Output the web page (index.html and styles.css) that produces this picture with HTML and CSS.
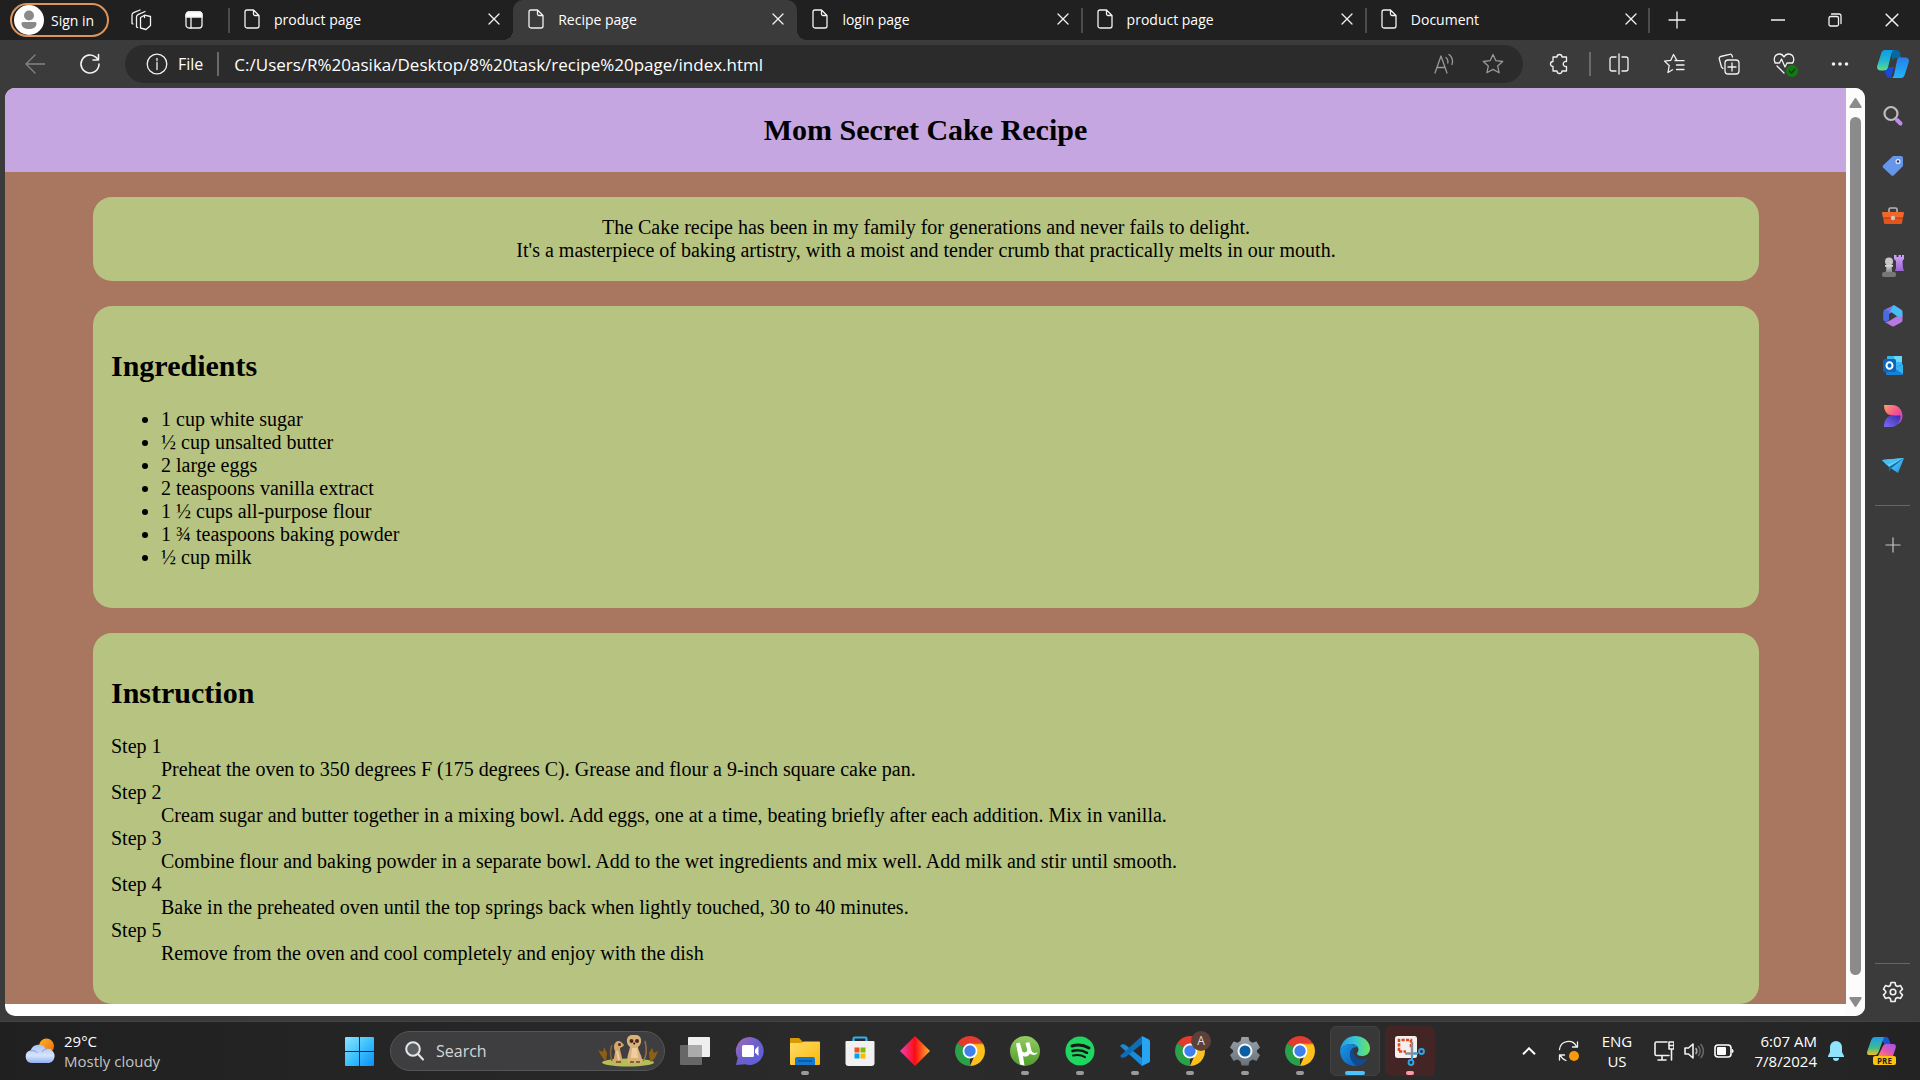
FILE: index.html
```html
<!DOCTYPE html>
<html lang="en">
<head>
<meta charset="utf-8">
<meta name="viewport" content="width=device-width, initial-scale=1">
<title>Recipe page</title>
<link rel="stylesheet" href="styles.css">
</head>
<body>
<svg class="sprite" width="0" height="0" aria-hidden="true">
  <defs>
    <linearGradient id="g-win" x1="0" y1="0" x2="1" y2="1"><stop offset="0" stop-color="#8be4ff"/><stop offset=".5" stop-color="#3dc1fb"/><stop offset="1" stop-color="#0a8ffb"/></linearGradient>
    <linearGradient id="g-cloud" x1="0" y1="0" x2="0" y2="1"><stop offset="0" stop-color="#a9c3f4"/><stop offset=".6" stop-color="#d7e4fb"/><stop offset="1" stop-color="#8fb0ef"/></linearGradient>
    <linearGradient id="g-sun" x1="0" y1="0" x2="1" y2="1"><stop offset="0" stop-color="#f8b42c"/><stop offset="1" stop-color="#ee6c0e"/></linearGradient>
    <linearGradient id="g-teal" x1="0" y1="0" x2="0" y2="1"><stop offset="0" stop-color="#0f9be8"/><stop offset=".5" stop-color="#20b5d0"/><stop offset="1" stop-color="#5edc8c"/></linearGradient>
    <linearGradient id="g-blue" x1="0" y1="0" x2="0" y2="1"><stop offset="0" stop-color="#2a7de8"/><stop offset="1" stop-color="#1fb6fa"/></linearGradient>
    <linearGradient id="g-pre1" x1="0" y1="0" x2="0" y2="1"><stop offset="0" stop-color="#1e9bf0"/><stop offset=".6" stop-color="#3fbb8c"/><stop offset="1" stop-color="#f0c020"/></linearGradient>
    <linearGradient id="g-pre2" x1="1" y1="0" x2="0" y2="1"><stop offset="0" stop-color="#9a55f5"/><stop offset=".6" stop-color="#e858a8"/><stop offset="1" stop-color="#ff8a55"/></linearGradient>
    <linearGradient id="g-folder" x1="0" y1="0" x2="1" y2="1"><stop offset="0" stop-color="#ffdc66"/><stop offset="1" stop-color="#fbb80c"/></linearGradient>
    <linearGradient id="g-chat" x1="0" y1="0" x2="1" y2="1"><stop offset="0" stop-color="#a66ab8"/><stop offset=".5" stop-color="#6a60cc"/><stop offset="1" stop-color="#5a5fe0"/></linearGradient>
    <linearGradient id="g-diamond" x1="0" y1="0" x2="1" y2="0"><stop offset="0" stop-color="#f23fb6"/><stop offset=".5" stop-color="#f90d14"/><stop offset="1" stop-color="#ffb52c"/></linearGradient>
    <linearGradient id="g-edge1" x1="0" y1="0" x2="1" y2="0"><stop offset="0" stop-color="#1e9ee8"/><stop offset=".5" stop-color="#35c7d8"/><stop offset="1" stop-color="#6fe55c"/></linearGradient>
    <linearGradient id="g-edge2" x1="0" y1="0" x2="1" y2="1"><stop offset="0" stop-color="#1b96e6"/><stop offset="1" stop-color="#0c5db2"/></linearGradient>
    <linearGradient id="g-tele" x1="0" y1="0" x2="1" y2="1"><stop offset="0" stop-color="#5fd8fb"/><stop offset="1" stop-color="#1d8fe0"/></linearGradient>
    <linearGradient id="g-des1" x1="0" y1="0" x2="1" y2="1"><stop offset="0" stop-color="#ffa060"/><stop offset=".5" stop-color="#f4538e"/><stop offset="1" stop-color="#a83cf0"/></linearGradient>
    <linearGradient id="g-des2" x1="0" y1="1" x2="1" y2="0"><stop offset="0" stop-color="#7b6cf8"/><stop offset="1" stop-color="#3a2ca8"/></linearGradient>
    <linearGradient id="g-grey" x1="0" y1="0" x2="0" y2="1"><stop offset="0" stop-color="#dcdcdc"/><stop offset="1" stop-color="#7d7d7d"/></linearGradient>
    <linearGradient id="g-rook" x1="0" y1="0" x2="0" y2="1"><stop offset="0" stop-color="#d0a4f6"/><stop offset="1" stop-color="#9a62d6"/></linearGradient>
    <linearGradient id="g-gear" x1="0" y1="0" x2="0" y2="1"><stop offset="0" stop-color="#98a2ab"/><stop offset="1" stop-color="#68727b"/></linearGradient>
    <linearGradient id="g-ut" x1="0" y1="0" x2="0" y2="1"><stop offset="0" stop-color="#94cc62"/><stop offset="1" stop-color="#4f9d2c"/></linearGradient>
    <symbol id="page" viewBox="0 0 16 20"><path d="M3 1h6.500L15 6.500V17a2 2 0 0 1-2 2H3a2 2 0 0 1-2-2V3a2 2 0 0 1 2-2zM9.500 1v4a1.500 1.500 0 0 0 1.500 1.500h4"/></symbol>
    <symbol id="cross" viewBox="0 0 12 12"><path d="M1 1l10 10M11 1L1 11"/></symbol>
    <symbol id="plus" viewBox="0 0 18 18"><path d="M9 1v16M1 9h16"/></symbol>
    <symbol id="chrome" viewBox="0 0 30 30">
      <path d="M15 15L2.010 7.500A15 15 0 0 1 27.990 7.500z" fill="#e33b2e"/>
      <path d="M15 15L2.010 7.500A15 15 0 0 0 15 30z" fill="#2aa148"/>
      <path d="M15 15h6.500L15 30A15 15 0 0 0 27.990 7.500H15z" fill="#fcc21b"/>
      <path d="M15 7.500h13L28 8.200H15z" fill="#e33b2e"/>
      <path d="M8.500 18.700L2 7.500 15 15z" fill="#2aa148"/>
      <circle cx="15" cy="15" r="7.400" fill="#fff"/><circle cx="15" cy="15" r="5.700" fill="#3f80ee"/>
    </symbol>
  </defs>
</svg>

<div class="window">
  <header class="tabbar">
    <div class="tab-tools">
      <button class="signin" type="button">
        <svg width="30" height="30" viewBox="0 0 30 30" aria-hidden="true"><circle cx="15" cy="15" r="15" fill="#fff"/><circle cx="15" cy="10.500" r="5" fill="#8a8a8a"/><path d="M9 17h12a1.500 1.500 0 0 1 1.500 1.500c0 4-3.500 5.500-7.500 5.500s-7.500-1.500-7.500-5.500A1.500 1.500 0 0 1 9 17z" fill="#8a8a8a"/></svg>
        Sign in
      </button>
      <button class="icon-btn" type="button" aria-label="Workspaces"><svg class="line" width="22" height="22" viewBox="0 0 22 22"><path d="M10.500 8.500l4-2.300 6 1.300v9l-4.500 4-5.500-1.500zM6.500 18V8a2.500 2.500 0 0 1 1.500-2.300l7-3.200M6.500 18l1.200.5M2 14.500V6a2.500 2.500 0 0 1 1.500-2.300L10 1M14.500 6.200v2.300M2 14.500l1 .5"/></svg></button>
      <button class="icon-btn" type="button" aria-label="Tab actions"><svg class="line" width="20" height="20" viewBox="0 0 20 20"><rect x="2" y="2" width="16" height="16" rx="3"/><path d="M7 6v12"/><path d="M2 7V5a3 3 0 0 1 3-3h10a3 3 0 0 1 3 3v2z" fill="#fff"/></svg></button>
    </div>
    <nav class="tabs" aria-label="Tabs">
      <div class="tab"><svg class="line" width="16" height="20"><use href="#page"/></svg><a href="#">product page</a><button class="icon-btn" type="button" aria-label="Close tab"><svg class="line" width="12" height="12"><use href="#cross"/></svg></button></div>
      <div class="tab active"><svg class="line" width="16" height="20"><use href="#page"/></svg><a href="#">Recipe page</a><button class="icon-btn" type="button" aria-label="Close tab"><svg class="line" width="12" height="12"><use href="#cross"/></svg></button></div>
      <div class="tab plain"><svg class="line" width="16" height="20"><use href="#page"/></svg><a href="#">login page</a><button class="icon-btn" type="button" aria-label="Close tab"><svg class="line" width="12" height="12"><use href="#cross"/></svg></button></div>
      <div class="tab"><svg class="line" width="16" height="20"><use href="#page"/></svg><a href="#">product page</a><button class="icon-btn" type="button" aria-label="Close tab"><svg class="line" width="12" height="12"><use href="#cross"/></svg></button></div>
      <div class="tab last"><svg class="line" width="16" height="20"><use href="#page"/></svg><a href="#">Document</a><button class="icon-btn" type="button" aria-label="Close tab"><svg class="line" width="12" height="12"><use href="#cross"/></svg></button></div>
    </nav>
    <div class="window-tools">
      <button class="icon-btn new-tab" type="button" aria-label="New tab"><svg class="line" width="18" height="18"><use href="#plus"/></svg></button>
      <button class="icon-btn ctl" type="button" aria-label="Minimise"><svg class="line" width="14" height="14" viewBox="0 0 14 14"><path d="M0 7h14"/></svg></button>
      <button class="icon-btn ctl" type="button" aria-label="Restore"><svg class="line" width="14" height="14" viewBox="0 0 14 14"><rect x="1" y="3.500" width="9.500" height="9.500" rx="1.500"/><path d="M3.500 1H11a2 2 0 0 1 2 2v7.500"/></svg></button>
      <button class="icon-btn ctl" type="button" aria-label="Close"><svg class="line" width="14" height="14"><use href="#cross"/></svg></button>
    </div>
  </header>

  <div class="toolbar">
    <div class="nav-tools">
      <button class="icon-btn dim" type="button" aria-label="Back"><svg class="line" width="20" height="20" viewBox="0 0 20 20"><path d="M20 10H1M10 1l-9 9 9 9"/></svg></button>
      <button class="icon-btn" type="button" aria-label="Reload"><svg class="line thick" width="22" height="22" viewBox="0 0 22 22"><path d="M20 11a9 9 0 1 1-3-6.700L19.500 7M19.500 1.500V7H14"/></svg></button>
    </div>
    <div class="address">
      <svg class="line" width="22" height="22" viewBox="0 0 22 22" aria-hidden="true"><circle cx="11" cy="11" r="9.800"/><path d="M11 9.500v7M11 5.500v2"/></svg>
      <label for="url">File</label>
      <span class="bar"></span>
      <input id="url" type="text" value="C:/Users/R%20asika/Desktop/8%20task/recipe%20page/index.html">
      <button class="icon-btn dim2" type="button" aria-label="Read aloud"><svg class="line" width="20" height="22" viewBox="0 0 20 22"><path d="M1 20L7 3l6 17M3 14.500h8M12 4.500c1.500 1.200 2.200 3.200 1.800 5.500M15 1.500c3 2.400 4.200 6 3 10"/></svg></button>
      <button class="icon-btn dim2" type="button" aria-label="Add to favourites"><svg class="line" width="22" height="22" viewBox="0 0 22 22"><path d="M11 1.500l2.900 6.200 6.800.8-5 4.600 1.400 6.700-6.100-3.400-6.100 3.400 1.400-6.700-5-4.600 6.800-.8z"/></svg></button>
    </div>
    <div class="actions">
      <button class="icon-btn" type="button" aria-label="Extensions"><svg class="line" width="22" height="22" viewBox="0 0 22 22"><path d="M5 4h4a2.500 2.500 0 0 1 5 0h4.500v4.500a2.600 2.600 0 1 0 0 5V18H14a2.500 2.500 0 0 1-5 0H5v-4.500a2.500 2.500 0 1 1 0-5z"/></svg></button>
      <span class="bar"></span>
      <button class="icon-btn" type="button" aria-label="Split screen"><svg class="line" width="22" height="22" viewBox="0 0 22 22"><path d="M11 1v20M8 4H4a2 2 0 0 0-2 2v10a2 2 0 0 0 2 2h4M14 4h4a2 2 0 0 1 2 2v10a2 2 0 0 1-2 2h-4"/></svg></button>
      <button class="icon-btn" type="button" aria-label="Favourites"><svg class="line" width="22" height="22" viewBox="0 0 22 22"><path d="M14 7.500L10.500 1.500 7.800 7.300 1.500 8.100l4.700 4.400L5 19.500l4.500-2.700M13 7.700h8M13.500 12h7.500M13.500 16.500h7.500M14 7.500h-2"/></svg></button>
      <button class="icon-btn" type="button" aria-label="Collections"><svg class="line" width="22" height="22" viewBox="0 0 22 22"><rect x="7" y="7" width="14" height="14" rx="3"/><path d="M14 10v8M10 14h8M14.500 4l-.5-1.500a2 2 0 0 0-2.400-1.200L2.700 3.500A2 2 0 0 0 1.300 6L3.500 14l1.500 1.500"/></svg></button>
      <button class="icon-btn" type="button" aria-label="Browser essentials"><svg class="line" width="25" height="25" viewBox="0 0 25 25"><path d="M2.500 11C0 7.500 1.500 2 6.500 2c2.500 0 4 2 4.500 3 .5-1 2-3 4.500-3 5 0 6.500 5.500 4 9M2 11h4.500l2-4 3.500 8 2-4h5M4 14l7 7"/><circle cx="19" cy="19" r="6" fill="#137a13" stroke="none"/><path d="M16.500 19l2 2 3.500-4" stroke="#0a3d0a"/></svg></button>
      <button class="icon-btn" type="button" aria-label="More"><svg width="18" height="6" viewBox="0 0 18 6" fill="#f2f2f2"><circle cx="2.500" cy="3" r="1.800"/><circle cx="9" cy="3" r="1.800"/><circle cx="15.500" cy="3" r="1.800"/></svg></button>
      <button class="icon-btn copilot" type="button" aria-label="Copilot"><svg width="32" height="28" viewBox="0 0 32 28"><path d="M14 0h5c2.500 0 3.500 1 4 3l1.500 5H19c-2 0-3 1-3.500 3z" fill="#07679e"/><path d="M8 0h9c-1 0-2 1-2.500 3l-3.500 14.500c-.6 2-1.700 3-3.500 3H3.500c-2.500 0-4-2-3.300-4.500L4 4c.7-2.500 2-4 4-4z" fill="url(#g-teal)"/><path d="M7 20.500c3 0 4-1.500 4.500-3.500H17l-3 11h-1c-2 0-3.500-1-4-3z" fill="#1a49d6"/><path d="M22 7.500h6.500c2.500 0 4 2 3.300 4.500L28 24c-.7 2.500-2 4-4 4H14.500c1 0 2-1 2.500-3l3-14.500c.4-2 1-3 2-3z" fill="url(#g-blue)"/></svg></button>
    </div>
  </div>

  <div class="middle">
    <div class="viewport">
      <main class="page">
        <div class="title"><h1>Mom Secret Cake Recipe</h1></div>
        <div class="recipe">
          <section class="card intro">The Cake recipe has been in my family for generations and never fails to delight.<br>It's a masterpiece of baking artistry, with a moist and tender crumb that practically melts in our mouth.</section>
          <section class="card">
            <h2>Ingredients</h2>
            <ul>
              <li>1 cup white sugar</li>
              <li>½ cup unsalted butter</li>
              <li>2 large eggs</li>
              <li>2 teaspoons vanilla extract</li>
              <li>1 ½ cups all-purpose flour</li>
              <li>1 ¾ teaspoons baking powder</li>
              <li>½ cup milk</li>
            </ul>
          </section>
          <section class="card">
            <h2>Instruction</h2>
            <dl>
              <dt>Step 1</dt><dd>Preheat the oven to 350 degrees F (175 degrees C). Grease and flour a 9-inch square cake pan.</dd>
              <dt>Step 2</dt><dd>Cream sugar and butter together in a mixing bowl. Add eggs, one at a time, beating briefly after each addition. Mix in vanilla.</dd>
              <dt>Step 3</dt><dd>Combine flour and baking powder in a separate bowl. Add to the wet ingredients and mix well. Add milk and stir until smooth.</dd>
              <dt>Step 4</dt><dd>Bake in the preheated oven until the top springs back when lightly touched, 30 to 40 minutes.</dd>
              <dt>Step 5</dt><dd>Remove from the oven and cool completely and enjoy with the dish</dd>
            </dl>
          </section>
        </div>
      </main>
      <div class="scrollbar" aria-hidden="true">
        <svg width="13" height="10" viewBox="0 0 13 10"><path d="M5.500.8a1.200 1.200 0 0 1 2 0L12.500 8.500a1 1 0 0 1-1 1.500h-10a1 1 0 0 1-1-1.500z" fill="#8b8b8b"/></svg>
        <span class="thumb"></span>
        <svg width="13" height="10" viewBox="0 0 13 10"><path d="M5.500 9.200a1.200 1.200 0 0 0 2 0L12.500 1.500a1 1 0 0 0-1-1.500h-10a1 1 0 0 0-1 1.500z" fill="#8b8b8b"/></svg>
      </div>
    </div>

    <aside class="sidebar" aria-label="Sidebar">
      <button class="icon-btn" type="button" aria-label="Search"><svg width="22" height="22" viewBox="0 0 22 22"><circle cx="9" cy="8.500" r="6.500" fill="none" stroke="#bdbdbd" stroke-width="2.200"/><path d="M15 15l3.500 3.500" stroke="#c08cf0" stroke-width="4" stroke-linecap="round"/></svg></button>
      <button class="icon-btn" type="button" aria-label="Shopping"><svg width="22" height="22" viewBox="0 0 22 22"><path d="M11 1h8a2 2 0 0 1 2 2v8L12 20a2 2 0 0 1-3 0L1.500 13a2 2 0 0 1 0-3z" fill="#6596ea"/><circle cx="16" cy="6.500" r="2.500" fill="#e8eefc"/><circle cx="16" cy="6.500" r="1.300" fill="#2b3a5c"/></svg></button>
      <button class="icon-btn" type="button" aria-label="Tools"><svg width="22" height="22" viewBox="0 0 22 22"><path d="M7 7V4.500A1.500 1.500 0 0 1 8.500 3h5A1.500 1.500 0 0 1 15 4.500V7" fill="none" stroke="#b5b5b5" stroke-width="1.600"/><path d="M1 12h20l-1 6a1 1 0 0 1-1 1H3a1 1 0 0 1-1-1z" fill="#e5541a"/><path d="M1 7h20a1 1 0 0 1 1 1l-1 5H1L0 8a1 1 0 0 1 1-1z" fill="#f0662b"/><path d="M1 13h20" stroke="#a83a10"/><circle cx="11" cy="13" r="2.200" fill="#d0c7c2"/></svg></button>
      <button class="icon-btn" type="button" aria-label="Games"><svg width="22" height="22" viewBox="0 0 22 22"><path d="M12 0h2.500v2h2V0h2.500v2h1V0H22v4l-1.500 2 .5 7 1 3h-9l1-3V6l-2-2z" fill="url(#g-rook)"/><circle cx="7" cy="6.500" r="4" fill="#c6c6c6"/><path d="M3 10h8v1.500l-1.500 1 1 5.500H3.500l1-5.500-1.500-1z" fill="url(#g-grey)"/><path d="M0 19a2 2 0 0 1 2-2h10a2 2 0 0 1 2 2v1a2 2 0 0 1-2 2H2a2 2 0 0 1-2-2z" fill="#777"/></svg></button>
      <button class="icon-btn" type="button" aria-label="Microsoft 365"><svg width="22" height="22" viewBox="0 0 22 22"><path d="M12 0L3 4.500a3 3 0 0 0-1.500 2.600V14c0 2 3 3 5.500 1V9l6-4z" fill="#7b78e6"/><path d="M10.500 1.500L12 0l7 4.500a3 3 0 0 1 1.500 2.600V11c-2 2-5 1.500-6.500-.5L8.500 6.500z" fill="#46bdf5"/><path d="M20.500 10v5a3 3 0 0 1-1.500 2.600L12.500 21a3 3 0 0 1-3 0l-7-4.300c2 .3 4-.2 5.500-1.200l6.500-4c2 .8 4.500.5 6-1.500z" fill="#b878e4"/><path d="M7 9v6c-1.500 1.500-4 2-5.500.5V7.100L3 4.500 7 6z" fill="#4a6ae0"/></svg></button>
      <button class="icon-btn" type="button" aria-label="Outlook"><svg width="22" height="22" viewBox="0 0 22 22"><rect x="5" y="1" width="15" height="12" rx="1" fill="#39b5ee"/><path d="M12 1h8v6h-8z" fill="#67d7fb"/><path d="M21 9v10a1 1 0 0 1-1 1H5a1 1 0 0 1-1-1V13h8z" fill="#1581d4"/><path d="M21 9.500V19L12 13z" fill="#35b0f0"/><rect x="1" y="4" width="13" height="13" rx="1.500" fill="#0c66bd"/><ellipse cx="7.500" cy="10.500" rx="3" ry="3.300" fill="none" stroke="#fff" stroke-width="2"/></svg></button>
      <button class="icon-btn" type="button" aria-label="Designer"><svg width="22" height="22" viewBox="0 0 22 22"><path d="M2 0h8c6 0 10.500 4.500 10.500 11 0 4-2 7-5 8.500l-4-9C6 11 2 7 2 0z" fill="url(#g-des1)"/><path d="M2 22C2 15 5 10.500 11 10.500h7.500C18.500 17 15 22 9 22z" fill="url(#g-des2)"/></svg></button>
      <button class="icon-btn" type="button" aria-label="Drop"><svg width="22" height="22" viewBox="0 0 22 22"><path d="M0 5l22-2-15 9z" fill="#5ed3f8"/><path d="M22 3l-6 15-9-6z" fill="url(#g-tele)"/><path d="M7 12L22 3 9 13.500 7 17z" fill="#1469b8"/><path d="M0 5l22-2L5 10z" fill="#49bdf2"/></svg></button>
      <span class="rule"></span>
      <button class="icon-btn" type="button" aria-label="Customise"><svg class="line soft" width="16" height="16"><use href="#plus"/></svg></button>
      <span class="rule bottom"></span>
      <button class="icon-btn" type="button" aria-label="Settings"><svg class="line thick" width="22" height="22" viewBox="0 0 22 22"><circle cx="11" cy="11" r="2.800"/><path d="M9 1.500h4l.7 3 1.800 1 3-.9 2 3.500-2.200 2.200v1.400l2.200 2.200-2 3.500-3-.9-1.800 1-.7 3H9l-.7-3-1.800-1-3 .9-2-3.500 2.200-2.200v-1.400L1.500 8.100l2-3.500 3 .9 1.800-1z"/></svg></button>
    </aside>
  </div>
</div>

<footer class="taskbar">
  <div class="weather">
    <svg width="31" height="26" viewBox="0 0 31 26" aria-hidden="true"><circle cx="21.500" cy="8" r="7.500" fill="url(#g-sun)"/><path d="M6.500 25a6.500 6.500 0 0 1-.8-12.800A8.500 8.500 0 0 1 21 11a7 7 0 0 1 3 14z" fill="url(#g-cloud)"/><path d="M6 13c3-1 5 0 6.500 2M17 14c1-2 2.500-3 5-3" stroke="#7f9fe6" fill="none"/></svg>
    <p><span>29°C</span><span class="muted">Mostly cloudy</span></p>
  </div>
  <div class="apps">
    <button class="app" type="button" aria-label="Start"><svg width="29" height="29" viewBox="0 0 29 29"><path d="M1 0h13v14H0V1a1 1 0 0 1 1-1zM15 0h13a1 1 0 0 1 1 1v13H15zM0 15h14v14H1a1 1 0 0 1-1-1zM15 15h14v13a1 1 0 0 1-1 1H15z" fill="url(#g-win)"/></svg></button>
    <label class="search">
      <svg width="20" height="20" viewBox="0 0 20 20" fill="none" stroke="#e6e6e6" stroke-width="2"><circle cx="8" cy="8" r="6.800" fill="#5a5d61"/><path d="M13 13l5 5.500" stroke-linecap="round"/></svg>
      <input type="search" placeholder="Search" aria-label="Search">
      <svg width="62" height="32" viewBox="0 0 62 32" aria-hidden="true">
        <ellipse cx="31" cy="27.500" rx="26" ry="4" fill="#b6bf55"/>
        <path d="M8 26L4 20l-3-5 5 2 1-5 3 6-1 8zM53 26l-1-8 3-5 2 5 4-2-3 7-4 4z" fill="#8f6012"/>
        <path d="M15 26c-2-6-2-11 0-16" stroke="#8a6436" stroke-width="1.500" fill="none"/>
        <path d="M46 26c4-5 4-12 2-20" stroke="#9a7240" stroke-width="1.500" fill="none"/>
        <path d="M17 28c-1-5 1-7 1-12-2-4-1-9 3-10 3 0 4 2 6 4-1 2-3 2-4 3 0 4 3 9 2 15z" fill="#d3a76e"/>
        <path d="M31 28c-2-6 1-10 2-16-4-3-4-9-1-11 3-2 7-2 10 0 3 2 3 8-1 11 1 6 5 10 4 16z" fill="#d9b17a"/>
        <path d="M35 13h5l1 10h-7z" fill="#edcf9f"/><path d="M20 16l2 9" stroke="#edcf9f" stroke-width="2"/>
        <circle cx="34.500" cy="6" r="2" fill="#4a2a1a"/><circle cx="40" cy="6" r="2" fill="#4a2a1a"/><circle cx="22.500" cy="9.500" r="1.500" fill="#4a2a1a"/><circle cx="37.200" cy="8.500" r="1" fill="#20120a"/>
        <path d="M33 27h4M39 27h4M19 27h5" stroke="#8a6030" stroke-width="2"/>
      </svg>
    </label>
    <button class="app" type="button" aria-label="Task view"><svg width="30" height="28" viewBox="0 0 30 28"><rect x="8" width="22" height="20" rx="1" fill="#efefef"/><rect y="8" width="22" height="20" rx="1" fill="#6e6e6e" opacity=".9"/><path d="M8 8h14v12H8z" fill="#ababab"/></svg></button>
    <button class="app" type="button" aria-label="Chat"><svg width="30" height="30" viewBox="0 0 30 30"><path d="M15 1a14 14 0 1 1-5 27.200L1 29l1.800-7A14 14 0 0 1 15 1z" fill="url(#g-chat)"/><rect x="7" y="9" width="12" height="12" rx="1.500" fill="#fff"/><path d="M20 13.500L23.500 10v10L20 16.500z" fill="#fff"/></svg></button>
    <button class="app run" type="button" aria-label="File Explorer"><svg width="30" height="27" viewBox="0 0 30 27"><path d="M1 0h8l4 4h16v6H0V1a1 1 0 0 1 1-1z" fill="#d99a06"/><path d="M0 5h11l3-1.500h15a1 1 0 0 1 1 1V26a1 1 0 0 1-1 1H1a1 1 0 0 1-1-1z" fill="url(#g-folder)"/><path d="M7 19h16a2 2 0 0 1 2 2v6H5v-6a2 2 0 0 1 2-2z" fill="#1279cf"/><path d="M8 23h14" stroke="#08549b" stroke-width="1.500"/></svg></button>
    <button class="app" type="button" aria-label="Store"><svg width="30" height="30" viewBox="0 0 30 30"><path d="M8.500 7V2.500a1 1 0 0 1 1-1h11a1 1 0 0 1 1 1V7" fill="none" stroke="#2fb1f0" stroke-width="2"/><path d="M1.500 5h27a1 1 0 0 1 1 1v21a3 3 0 0 1-3 3h-23a3 3 0 0 1-3-3V6a1 1 0 0 1 1-1z" fill="#f1f1f1"/><path d="M8.500 5V3.500M21.500 5V3.500" stroke="#2fb1f0" stroke-width="2"/><path d="M9.500 11.500h5v5h-5z" fill="#f25022"/><path d="M15.500 11.500h5v5h-5z" fill="#7fba00"/><path d="M9.500 17.500h5v5h-5z" fill="#00a4ef"/><path d="M15.500 17.500h5v5h-5z" fill="#ffb900"/></svg></button>
    <button class="app" type="button" aria-label="Diamond"><svg width="30" height="30" viewBox="0 0 30 30"><path d="M15 0l15 15-15 15L0 15z" fill="url(#g-diamond)"/></svg></button>
    <button class="app" type="button" aria-label="Chrome"><svg width="30" height="30"><use href="#chrome"/></svg></button>
    <button class="app run" type="button" aria-label="uTorrent"><svg width="30" height="30" viewBox="0 0 30 30"><circle cx="15" cy="15" r="15" fill="url(#g-ut)"/><path d="M6 7.500l3.800-1 2.400 8.500c.7 2.500 5.500 1.500 5-1.500L15.500 7l3.800-1 2.200 8.500c.7 2.300 3 3 6 1.800-.5 2.700-4.500 3.700-7.500 1.200-1.300 3-4.500 3.800-7 2.500l1.500 9.500-4.500-1z" fill="#fff"/></svg></button>
    <button class="app run" type="button" aria-label="Spotify"><svg width="30" height="30" viewBox="0 0 30 30" fill="none" stroke="#181818" stroke-linecap="round"><circle cx="15" cy="15" r="14.500" fill="#1fd660" stroke="none"/><path d="M7 10c5.500-1.600 12-1 17 2" stroke-width="3"/><path d="M7.500 15c5-1.400 10-.8 14.500 1.800" stroke-width="2.500"/><path d="M8 19.500c4.300-1 8.500-.6 12 1.600" stroke-width="2"/></svg></button>
    <button class="app run" type="button" aria-label="Code"><svg width="30" height="30" viewBox="0 0 30 30"><path d="M22 0l7 3.400a2 2 0 0 1 1 1.600v20a2 2 0 0 1-1 1.600L22 30z" fill="#27a4f2"/><path d="M0 10l2-1.800 3 .2L22 22v8z" fill="#1b8ad8"/><path d="M0 20l2 1.800 3-.2L22 8V0z" fill="#0e6fb8"/></svg></button>
    <button class="app run" type="button" aria-label="Chrome, profile A"><svg width="30" height="30"><use href="#chrome"/></svg><span class="badge">A</span></button>
    <button class="app run" type="button" aria-label="Settings"><svg width="30" height="30" viewBox="0 0 30 30"><path d="M11.500 1h7l1 4 3 1.800 4-1.300 3.500 6-3 2.700v2l3 2.700-3.500 6-4-1.300-3 1.800-1 4h-7l-1-4-3-1.800-4 1.300L0 18.900l3-2.700v-2L0 11.500l3.500-6 4 1.300 3-1.800z" fill="url(#g-gear)"/><circle cx="15" cy="15" r="7.500" fill="#f2f5f7"/><circle cx="15" cy="15" r="5.500" fill="#0b5da5"/></svg></button>
    <button class="app run" type="button" aria-label="Chrome"><svg width="30" height="30"><use href="#chrome"/></svg></button>
    <button class="app run current" type="button" aria-label="Edge"><svg width="30" height="30" viewBox="0 0 30 30"><path d="M0 15C1 5 8 0 15 0c9 0 15 6 15 12.500 0 5-4 7.500-8 7.500-3.500 0-5-1.500-5-2.500s1.500-1.500 1.500-4c0-3-3-5.500-7-5.500C5.500 8 1.500 11 0 15z" fill="url(#g-edge1)"/><path d="M0 15c1.500-4 5.500-7 10.500-7 3 0 6 1 7.500 3-5-.5-8 3-8 7 0 6 4 10.500 9 11.500A15 15 0 0 1 0 15z" fill="url(#g-edge2)"/><path d="M10 18c0-3 1.500-5.500 4-6.500-1.500 4 .5 12 8 12 2.500 0 4.500-.7 6-1.300C25 27.500 21 30 17 29.900 12.500 27.500 10 23 10 18z" fill="#114a90"/></svg></button>
    <button class="app run snip" type="button" aria-label="Snipping Tool"><svg width="30" height="30" viewBox="0 0 30 30"><rect width="22" height="22" rx="2.500" fill="#f4f0f0"/><path d="M4 15V4h12v8M4 15.500h7" fill="none" stroke="#d84a20" stroke-width="2.600" stroke-dasharray="3.200 1.300"/><path d="M17 6v15M10 17.500h12" stroke="#8a9097" stroke-width="2.400"/><path d="M17 19v5M19 17.500h4" stroke="#2fa3e4" stroke-width="2"/><circle cx="16" cy="26.500" r="2.400" fill="none" stroke="#2fa3e4" stroke-width="2"/><circle cx="26.500" cy="15.500" r="2.400" fill="none" stroke="#2fa3e4" stroke-width="2"/></svg></button>
  </div>
  <div class="tray">
    <button class="icon-btn" type="button" aria-label="Hidden icons"><svg width="14" height="8" viewBox="0 0 14 8" fill="none" stroke="#fff" stroke-width="2"><path d="M1 7.300l6-6 6 6"/></svg></button>
    <button class="icon-btn sync" type="button" aria-label="Update"><svg class="line" width="22" height="22" viewBox="0 0 22 22"><path d="M1.500 9.500a9 9 0 0 1 17-3M19.500 2v5h-5M8 20.500a9 9 0 0 1-5.500-5M1.500 20v-5h5"/><circle cx="16" cy="16" r="5" fill="#fb9a0c" stroke="none"/></svg></button>
    <button class="icon-btn lang" type="button"><span>ENG</span><span>US</span></button>
    <button class="icon-btn status" type="button" aria-label="Network, volume, battery">
      <svg class="line thick" width="20" height="20" viewBox="0 0 20 20"><path d="M13 1H2.500A1.500 1.500 0 0 0 1 2.500V13a1.500 1.500 0 0 0 1.500 1.500H15M8 15v4M4 19h8M17.500 9v10M15 1h5v7h-5zM15 4.500h5"/></svg>
      <svg class="line thick" width="20" height="18" viewBox="0 0 20 18"><path d="M1 6h3.500L9 2v14l-4.500-4H1z"/><path d="M12 6.500c1 1.500 1 3.500 0 5" stroke="#aaa"/><path d="M14.500 4.500c2 2.700 2 6.300 0 9M17 2.500c3 4 3 9 0 13" stroke="#666"/></svg>
      <svg width="20" height="14" viewBox="0 0 20 14"><rect x="1" y="1" width="16" height="12" rx="3" fill="none" stroke="#fff" stroke-width="1.600"/><rect x="3" y="3" width="9" height="8" rx="1" fill="#fff"/><path d="M18 5c2 0 2 4 0 4z" fill="#fff"/></svg>
    </button>
    <button class="icon-btn clock" type="button"><span>6:07 AM</span><span>7/8/2024</span></button>
    <button class="icon-btn bell" type="button" aria-label="Notifications"><svg width="16" height="20" viewBox="0 0 16 20"><path d="M8 0a6 6 0 0 1 6 6v5l2 4v1H0v-1l2-4V6a6 6 0 0 1 6-6zM5 17h6a3 3 0 0 1-6 0z" fill="#8fe4fc"/></svg></button>
    <button class="icon-btn pre" type="button" aria-label="Copilot preview"><svg width="29" height="28" viewBox="0 0 29 28"><path d="M13 0h6c2 0 3 2 3.500 4L24 8h-6z" fill="#1856d8"/><path d="M8 0h9l-5 14c-.7 2-2 4-4 4H2.500C0 18-.4 16 .5 13.500L4 3.500C5 1 6 0 8 0z" fill="url(#g-pre1)"/><path d="M19 7h7c2.500 0 3.500 1.500 2.500 4.500L26 19H11l4-8c1-2.500 2-4 4-4z" fill="url(#g-pre2)"/></svg><span class="tag">PRE</span></button>
  </div>
</footer>
</body>
</html>
```
FILE: styles.css
```css
* { box-sizing: border-box; }

body {
  margin: 0;
  min-height: 100vh;
  display: flex;
  flex-direction: column;
  background: #3b3b3b;
  color: #fff;
  font-family: "Open Sans", "Noto Sans", sans-serif;
  font-size: 14px;
}

button, input { font: inherit; color: inherit; }
svg { flex: none; display: block; }
.sprite { position: absolute; }

.line { fill: none; stroke: #f2f2f2; stroke-width: 1.3; stroke-linecap: round; stroke-linejoin: round; }
.line.thick { stroke-width: 1.6; }
.line.soft { stroke: #c8c8c8; }

.icon-btn {
  display: flex;
  align-items: center;
  justify-content: center;
  margin: 0;
  padding: 0;
  border: 0;
  background: none;
}
.dim { opacity: .4; }
.dim2 { opacity: .55; }

.window { flex: 1; display: flex; flex-direction: column; }

/* Tab strip */
.tabbar { display: flex; height: 40px; background: #202020; }
.tab-tools { display: flex; align-items: center; gap: 32px; flex: 0 0 229px; padding-left: 10px; }
.signin {
  display: flex;
  align-items: center;
  gap: 7px;
  width: 99px;
  height: 34px;
  margin-right: -11px;
  padding: 0 0 0 2px;
  border: 2px solid #dd935a;
  border-radius: 17px;
  background: none;
  white-space: nowrap;
}
.tabs { display: flex; flex: 0 1 1421px; min-width: 0; }
.tab {
  position: relative;
  display: flex;
  align-items: center;
  flex: 1 1 0;
  min-width: 0;
  padding: 0 13px 2px 15px;
}
.tab a {
  flex: 1;
  min-width: 0;
  padding-left: 14px;
  color: #fff;
  text-decoration: none;
  white-space: nowrap;
  overflow: hidden;
}
.tab::before {
  content: "";
  position: absolute;
  left: -1px;
  top: 8px;
  width: 2px;
  height: 25px;
  background: #4c4c4c;
}
.tab.plain::before { display: none; }
.tab.last::after {
  content: "";
  position: absolute;
  right: 0;
  top: 8px;
  width: 2px;
  height: 25px;
  background: #4c4c4c;
}
.tab.active { background: #3b3b3b; border-radius: 10px 10px 0 0; }
.tab.active::before, .tab.active::after {
  content: "";
  position: absolute;
  top: auto;
  bottom: 0;
  width: 10px;
  height: 10px;
}
.tab.active::before { left: -10px; background: radial-gradient(circle at 0 0, #202020 10px, #3b3b3b 10px); }
.tab.active::after { right: -10px; background: radial-gradient(circle at 100% 0, #202020 10px, #3b3b3b 10px); }
.window-tools { display: flex; flex: 1; padding-bottom: 1px; }
.new-tab { width: 54px; margin-right: auto; }
.ctl { width: 57px; }

/* Toolbar */
.toolbar { display: flex; align-items: center; height: 48px; background: #3b3b3b; }
.nav-tools { display: flex; gap: 34px; flex: 0 0 125px; padding-left: 25px; }
.address {
  display: flex;
  align-items: center;
  flex: 1;
  min-width: 0;
  height: 38px;
  padding: 0 19px 0 21px;
  border-radius: 19px;
  background: #2b2b2b;
  font-size: 16px;
}
.address label { margin: 0 14px 0 10px; }
.bar { width: 2px; height: 24px; background: #6a6a6a; }
.address input {
  flex: 1;
  min-width: 0;
  margin-left: 15px;
  padding: 0;
  border: 0;
  outline: 0;
  background: none;
  font-size: 17px;
}
.address .icon-btn + .icon-btn { margin-left: 28px; }
.actions { display: flex; align-items: center; gap: 33px; flex: 0 0 397px; padding-left: 25px; }
.actions .bar { margin: 0 -16px 0 -14px; }
.copilot { width: 22px; }

/* Web page area */
.middle { display: flex; flex: 1; }
.viewport {
  display: flex;
  flex: 1;
  min-width: 0;
  margin: 0 0 5px 5px;
  border-radius: 10px;
  background: #fff;
  overflow: hidden;
}
.page { flex: 1; min-width: 0; padding-bottom: 12px; color: #000; font: 20px/23px "Liberation Serif", "Times New Roman", serif; }
.title { padding: 25px; background: #c5a6e1; text-align: center; }
.page h1 { margin: 0; font-size: 30px; line-height: 34px; }
.recipe { display: flex; flex-direction: column; gap: 25px; padding: 25px 87px 0 88px; background: #a97660; }
.card { padding: 19px 18px; border-radius: 19px; background: #b7c481; }
.intro { text-align: center; }
.page h2 { margin: 24px 0 26px; font-size: 30px; line-height: 33px; }
.page ul { margin: 0 0 20px; padding-left: 50px; }
.page dl { margin: 0 0 20px; }
.page dd { margin-left: 50px; }
.scrollbar {
  display: flex;
  flex-direction: column;
  align-items: center;
  gap: 9px;
  width: 19px;
  padding: 10px 0 9px;
  background: #fcfcfc;
}
.scrollbar .thumb { flex: 1; width: 11px; margin-bottom: 13px; border-radius: 6px; background: #8b8b8b; }

/* Sidebar */
.sidebar { display: flex; flex-direction: column; align-items: center; gap: 28px; width: 55px; padding: 17px 0 18px; }
.sidebar .icon-btn { width: 22px; height: 22px; }
.rule { width: 35px; height: 1px; background: #666; }
.rule.bottom { margin-top: auto; margin-bottom: -11px; }

/* Taskbar */
.taskbar {
  display: flex;
  align-items: center;
  height: 59px;
  padding: 0 24px 0 25px;
  border-top: 1px solid #434343;
  background: linear-gradient(90deg, #202020, #2b2b2b 45%, #292929 85%, #232323);
  font-size: 15px;
}
.weather { display: flex; align-items: center; gap: 8px; flex: 0 0 309px; }
.weather p { display: flex; flex-direction: column; margin: 0; line-height: 20px; }
.muted { color: #c4c4c4; }
.apps { display: flex; align-items: center; gap: 5px; }
.app {
  position: relative;
  display: flex;
  align-items: center;
  justify-content: center;
  width: 50px;
  height: 50px;
  padding: 0;
  border: 1px solid transparent;
  border-radius: 6px;
  background: none;
}
.run::after {
  content: "";
  position: absolute;
  bottom: 0;
  width: 8px;
  height: 4px;
  border-radius: 2px;
  background: #9a9a9a;
}
.current { background: #383838; border-color: #414141; }
.current::after { width: 20px; background: #4cc2ff; }
.snip { background: #442525; }
.snip::after { background: #ff99a4; }
.badge {
  position: absolute;
  top: 4px;
  right: 3px;
  width: 20px;
  height: 20px;
  border-radius: 10px;
  background: #5d4037;
  color: #ddd;
  font-size: 12px;
  line-height: 20px;
}
.search {
  display: flex;
  align-items: center;
  width: 275px;
  height: 40px;
  margin-left: 1px;
  padding: 0 5px 0 14px;
  border: 1px solid #555;
  border-radius: 20px;
  background: #3e3e40;
}
.search input { flex: 1; min-width: 0; margin-left: 11px; padding: 0; border: 0; outline: 0; background: none; font-size: 16px; }
.search input::placeholder { color: #d6d6d6; opacity: 1; }
.tray { display: flex; align-items: center; flex: 0 0 374px; margin-left: auto; line-height: 20px; }
.sync { margin-left: 22px; }
.lang, .clock { flex-direction: column; }
.lang { width: 32px; margin-left: 21px; }
.status { gap: 10px; margin-left: 21px; }
.clock { align-items: flex-end; width: 66px; margin-left: auto; }
.bell { margin-left: 11px; }
.pre { position: relative; margin-left: 23px; }
.tag {
  position: absolute;
  right: 0;
  bottom: 0;
  width: 23px;
  height: 9px;
  border-radius: 2px;
  background: #ffc20e;
  color: #222;
  font-size: 8px;
  font-weight: 700;
  line-height: 9px;
  text-align: center;
}
```
